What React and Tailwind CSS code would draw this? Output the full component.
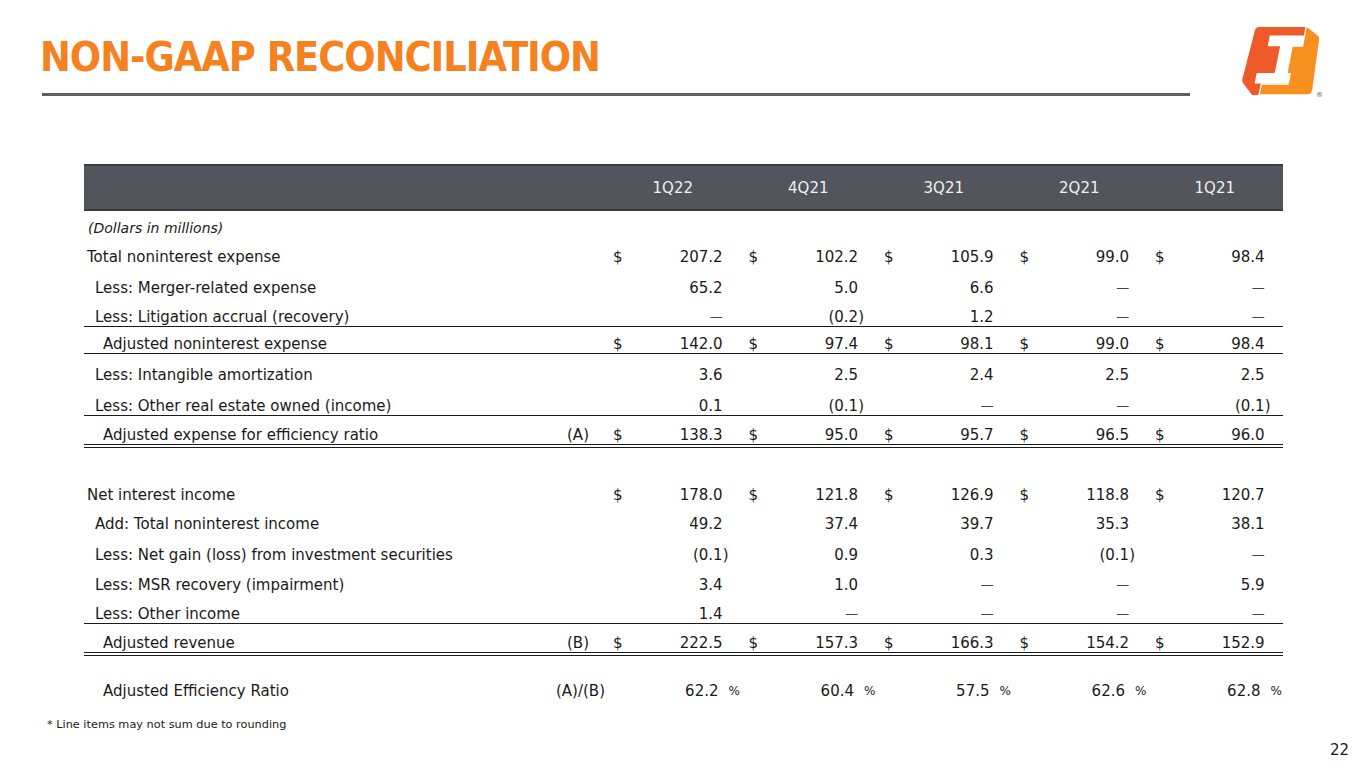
import React from "react";

const font = { fontFamily: '"DejaVu Sans", "Liberation Sans", sans-serif' };
const titleFont = { fontFamily: '"DejaVu Sans Condensed", "DejaVu Sans", sans-serif' };

const grid = "grid grid-cols-[472px_44px_repeat(5,135.5px)_6px]";

const rows = [
  { label: "Total noninterest expense", indent: "pl-[3px]", dollar: true, vals: ["207.2", "102.2", "105.9", "99.0", "98.4"], h: "h-[28px]" },
  { label: "Less: Merger-related expense", indent: "pl-[11px]", vals: ["65.2", "5.0", "6.6", "—", "—"], h: "h-[31px]" },
  { label: "Less: Litigation accrual (recovery)", indent: "pl-[11px]", vals: ["—", "(0.2)", "1.2", "—", "—"], h: "h-[30px]", line: "border-b border-[#1c1c1c]" },
  { label: "Adjusted noninterest expense", indent: "pl-[19px]", dollar: true, vals: ["142.0", "97.4", "98.1", "99.0", "98.4"], h: "h-[27px]", line: "border-b border-[#1c1c1c]" },
  { label: "Less: Intangible amortization", indent: "pl-[11px]", vals: ["3.6", "2.5", "2.4", "2.5", "2.5"], h: "h-[30px]" },
  { label: "Less: Other real estate owned (income)", indent: "pl-[11px]", vals: ["0.1", "(0.1)", "—", "—", "(0.1)"], h: "h-[32px]", line: "border-b border-[#1c1c1c]" },
  { label: "Adjusted expense for efficiency ratio", indent: "pl-[19px]", ref: "(A)", dollar: true, vals: ["138.3", "95.0", "95.7", "96.5", "96.0"], h: "h-[32px]", line: "border-b-4 border-double border-[#1c1c1c]" },
  { label: "Net interest income", indent: "pl-[3px]", dollar: true, vals: ["178.0", "121.8", "126.9", "118.8", "120.7"], h: "h-[56px]" },
  { label: "Add: Total noninterest income", indent: "pl-[11px]", vals: ["49.2", "37.4", "39.7", "35.3", "38.1"], h: "h-[29px]" },
  { label: "Less: Net gain (loss) from investment securities", indent: "pl-[11px]", vals: ["(0.1)", "0.9", "0.3", "(0.1)", "—"], h: "h-[31px]" },
  { label: "Less: MSR recovery (impairment)", indent: "pl-[11px]", vals: ["3.4", "1.0", "—", "—", "5.9"], h: "h-[30px]" },
  { label: "Less: Other income", indent: "pl-[11px]", vals: ["1.4", "—", "—", "—", "—"], h: "h-[30px]", line: "border-b border-[#1c1c1c]" },
  { label: "Adjusted revenue", indent: "pl-[19px]", ref: "(B)", dollar: true, vals: ["222.5", "157.3", "166.3", "154.2", "152.9"], h: "h-[32px]", line: "border-b-4 border-double border-[#1c1c1c]" },
];

const ratio = ["62.2", "60.4", "57.5", "62.6", "62.8"];

function Num({ v }) {
  if (v.startsWith("(")) return <span>{v}</span>;
  return (
    <span>
      {v === "—" ? <span className="text-[13px] text-[#444]">—</span> : v}
      <span className="invisible">)</span>
    </span>
  );
}

function Logo() {
  return (
    <svg width="82" height="72" viewBox="0 0 82 72" className="mt-[27px] ml-[52px] shrink-0">
      {/* red base */}
      <path d="M13,3 Q14,0 17,0 L65,0 L57,68 L10,68 L1,56 Q0,54 0.4,52 Z" fill="#ee5a2a" />
      {/* orange part: right strip, inside right of stem, bottom band */}
      <path
        d="M66,0 L77,9 Q78,10 77.8,12 L71,62 Q70.4,68 66,68 L17,68 L19.3,57 L46,57 L45,46 L50.2,19 L60.5,19 L62.5,9 L64,0 Z"
        fill="#f7901e"
        stroke="#ffffff"
        strokeWidth="1.3"
        strokeLinejoin="round"
      />
      {/* white I */}
      <path d="M27.8,8.5 L62.5,8.5 L60.4,19.2 L50.3,19.2 L44.9,46 L49,46 L46.9,56.6 L12.6,56.6 L14.7,46 L32.7,46 L38.1,19.2 L25.7,19.2 Z" fill="#ffffff" />
      <text x="74" y="70" fontSize="7" fill="#666" fontFamily="DejaVu Sans, sans-serif">®</text>
    </svg>
  );
}

export default function App() {
  return (
    <div className="w-[1365px] h-[768px] bg-white text-[#1a1a1a] overflow-hidden flex flex-col" style={font}>
      <div className="flex items-start h-[110px]">
        <div className="w-[1190px] pl-[40px]">
          <h1 className="text-[41px] leading-none font-bold text-[#f58220] mt-[37px] tracking-[-1px]" style={titleFont}>
            NON-GAAP RECONCILIATION
          </h1>
          <div className="h-[3px] bg-[#5d6067] mt-[15px] ml-[2px]" />
        </div>
        <Logo />
      </div>

      <div className="ml-[84px] mt-[54px] w-[1199px] text-[15px] leading-[18px]">
        <div className={`${grid} h-[47px] items-center bg-[#52555c] border-y-2 border-[#3a3c41] text-[#f0f0f0]`}>
          <div />
          <div />
          {["1Q22", "4Q21", "3Q21", "2Q21", "1Q21"].map((q) => (
            <div key={q} className="text-center pl-[10px]">{q}</div>
          ))}
          <div />
        </div>

        <div className="h-[27px] flex items-end pb-[1px] pl-[4px] italic text-[14px] leading-[18px]">
          (Dollars in millions)
        </div>

        {rows.map((r) => (
          <div key={r.label} className={`${grid} ${r.h} ${r.line || ""} items-end`}>
            <div className={`${r.indent} whitespace-nowrap`}>{r.label}</div>
            <div className="text-center">{r.ref || ""}</div>
            {r.vals.map((v, i) => (
              <div key={i} className="flex justify-between pl-[13px] pr-[7px]">
                <span>{r.dollar ? "$" : ""}</span>
                <Num v={v} />
              </div>
            ))}
            <div />
          </div>
        ))}

        <div className={`${grid} h-[44px] items-end`}>
          <div className="pl-[19px]">Adjusted Efficiency Ratio</div>
          <div className="text-center whitespace-nowrap">(A)/(B)</div>
          {ratio.map((v) => (
            <div key={v} className="flex justify-end pl-[13px] pr-[7px]">
              <span>{v}</span>
              <span className="inline-block w-[6px] shrink-0 pl-[10px] whitespace-nowrap text-[12px]">%</span>
            </div>
          ))}
          <div />
        </div>
      </div>

      <div className="ml-[47px] mt-[17px] text-[11.3px] leading-[16px]">* Line items may not sum due to rounding</div>
      <div className="mt-[8px] pr-[16px] text-right text-[15px] leading-[18px]">22</div>
    </div>
  );
}
